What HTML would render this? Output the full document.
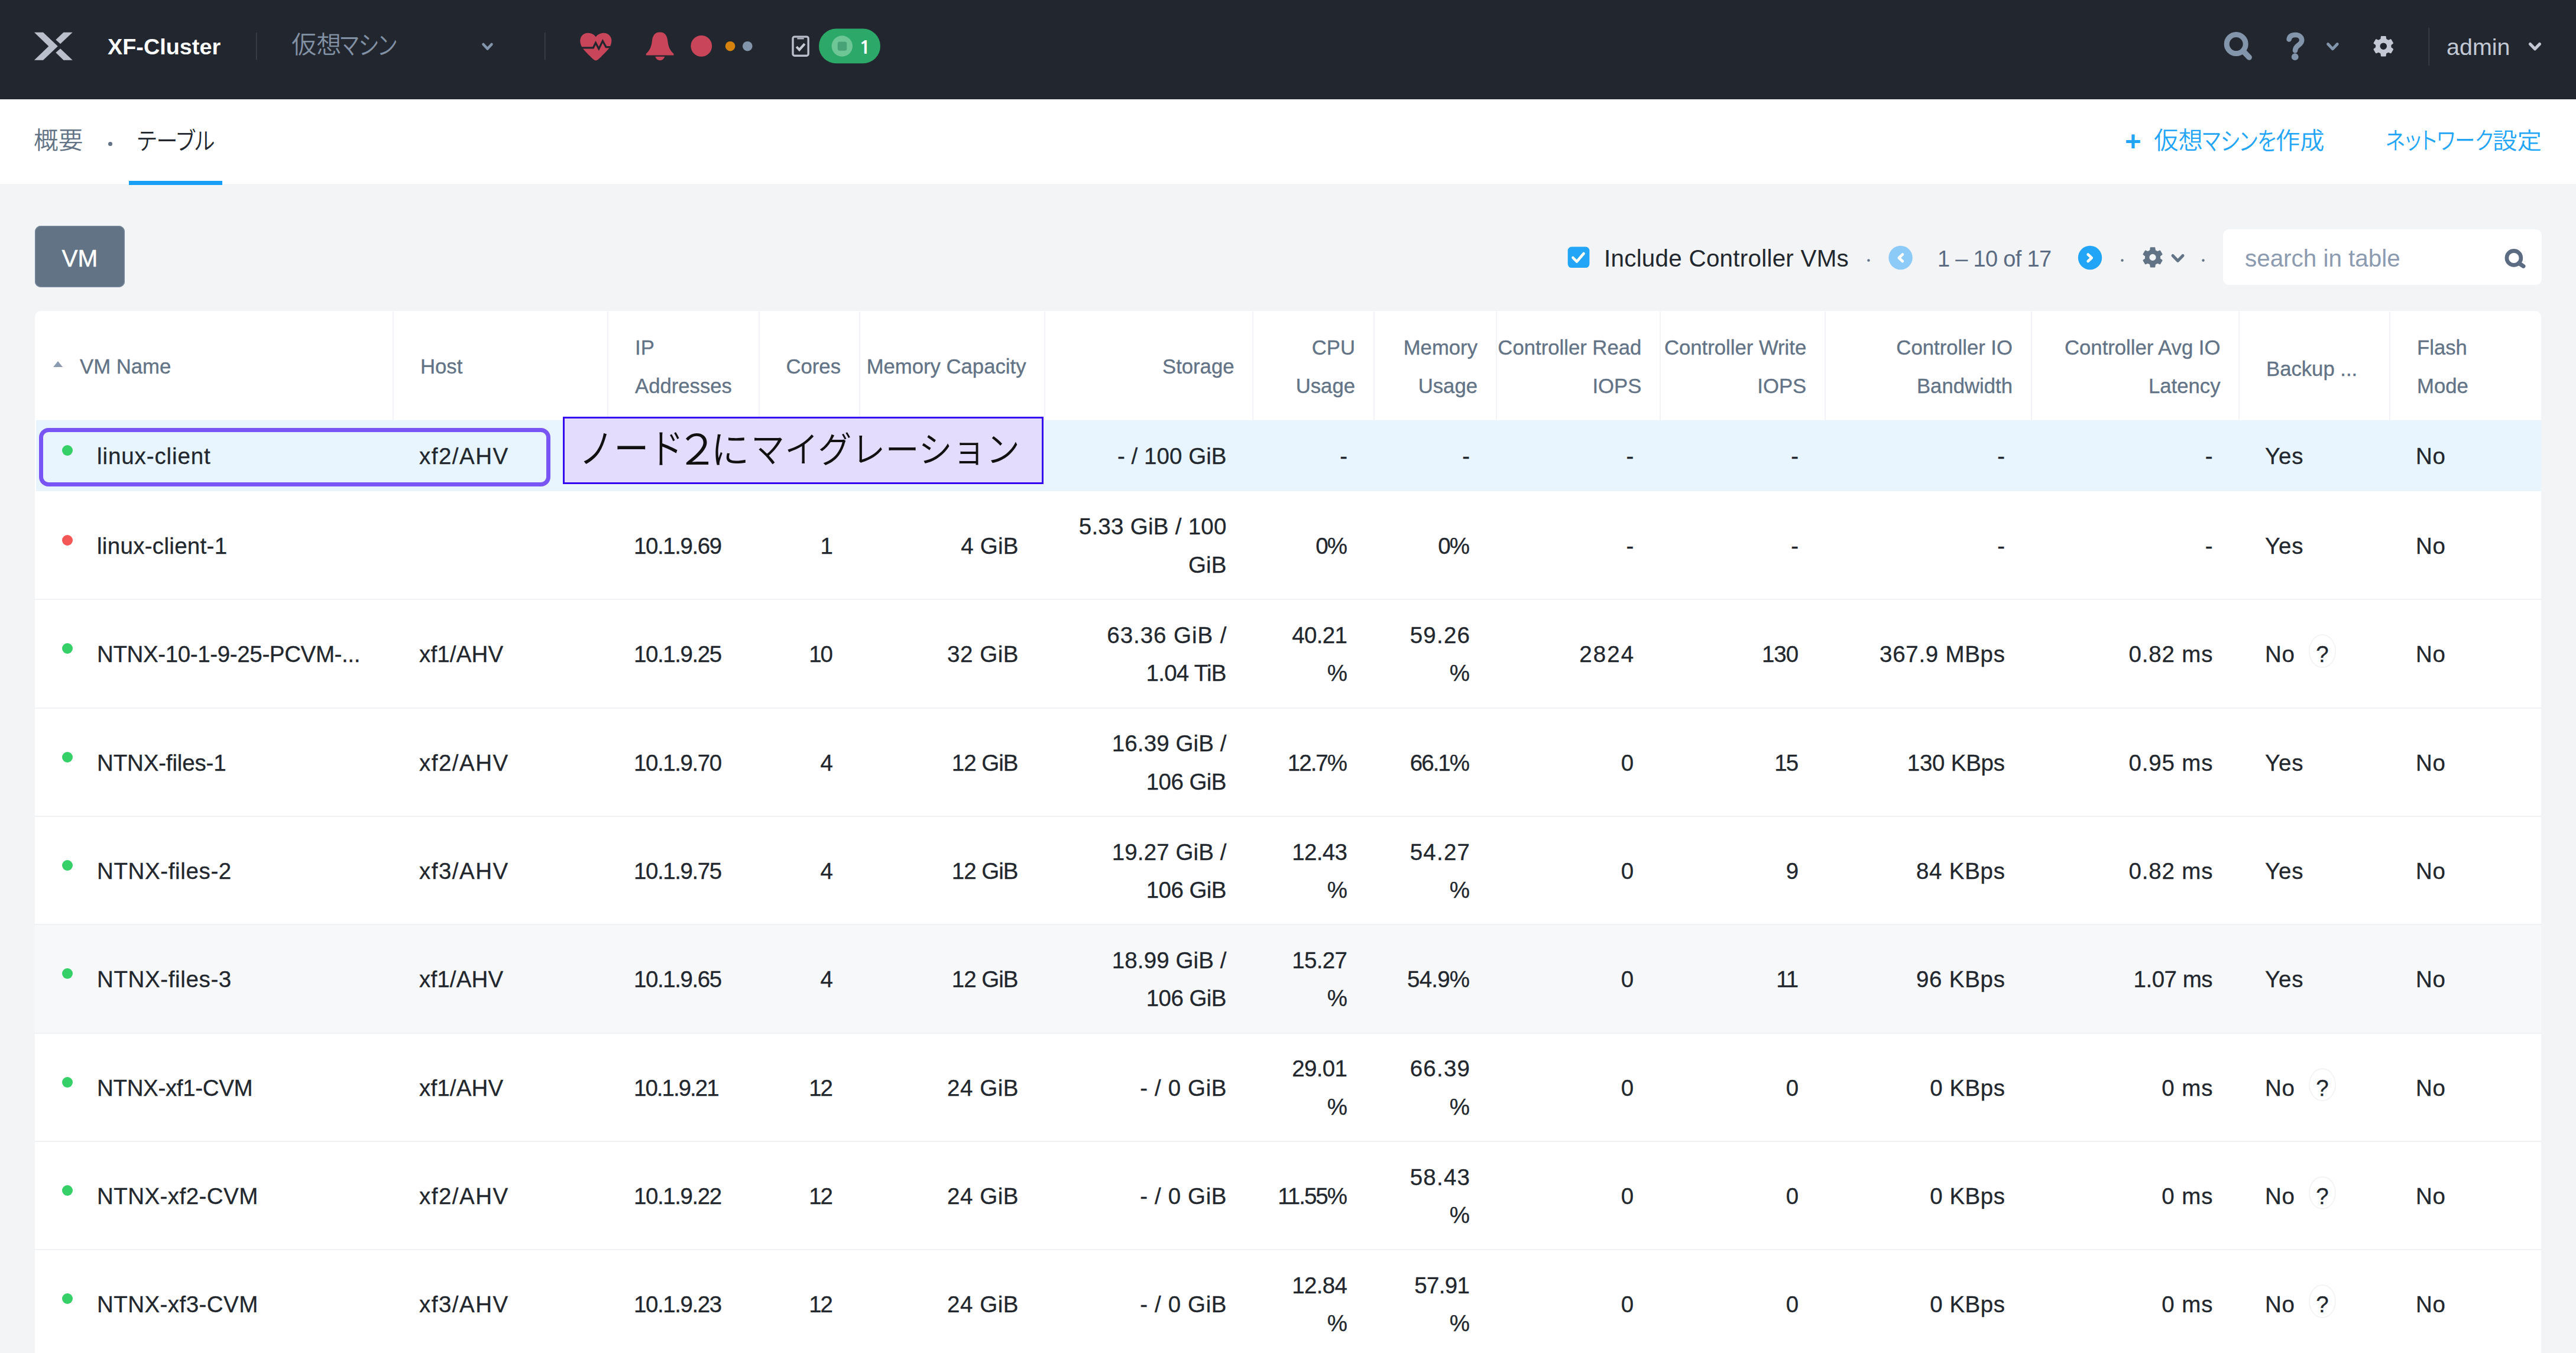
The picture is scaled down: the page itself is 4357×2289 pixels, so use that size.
<!DOCTYPE html>
<html lang="ja"><head><meta charset="utf-8"><title>XF-Cluster</title>
<style>
*{box-sizing:border-box;margin:0;padding:0}
html,body{width:4357px;height:2289px;overflow:hidden;background:#f2f4f6}
body{position:relative;font-family:"Liberation Sans","Noto Sans CJK JP",sans-serif;color:#22272e;font-size:38px}
.abs{position:absolute}
.jp{font-family:"Liberation Sans","Noto Sans CJK JP",sans-serif;font-feature-settings:"palt";white-space:nowrap;display:inline-block;transform-origin:left center}
svg{position:absolute;left:0;top:0;overflow:visible}
#hdr{position:absolute;left:0;top:0;width:4357px;height:167.8px;background:#22262e}
#sub{position:absolute;left:0;top:167.8px;width:4357px;height:143px;background:#fff}
.t{position:absolute;white-space:nowrap;line-height:1}
#tbl{position:absolute;left:59px;top:526.2px;width:4238.5px;height:1780px;background:#fff;border-radius:10px 10px 0 0;overflow:hidden}
.thead{position:absolute;left:0;top:0.8px;width:100%;height:184px}
.hc{position:absolute;top:0;height:184px;display:flex;align-items:center;color:#627386;font-size:34.7px;line-height:64.5px;padding:3.5px 30.5px 0 45px;white-space:nowrap;-webkit-text-stroke:0.35px #627386}
.hc.sep{border-left:2px solid #f1f3f6}
.hc.r{justify-content:flex-end;text-align:right}
.hc.l{justify-content:flex-start;text-align:left}
.hc span{display:block}
.sort{display:block;width:0;height:0;border-left:8px solid transparent;border-right:8px solid transparent;border-bottom:10.5px solid #8c9bb0;margin:-9px 29px 0 -14px}
.row{position:absolute;left:0;width:100%}
.row.bt{border-top:2px solid #f0f2f5}
.row.sel{background:linear-gradient(to right,#fff 2px,#e8f5fe 2px)}
.row.hov{background:#f7f8fa}
.c{position:absolute;top:0;height:100%;display:flex;align-items:center;font-size:38.5px;line-height:64.5px;padding:0 43.5px 0 45px;white-space:nowrap;-webkit-text-stroke:0.3px #22272e}
.row.bt .c{top:0}
.c.r{justify-content:flex-end;text-align:right}
.c.l{justify-content:flex-start}
.c .l{display:block}
.c .w{padding-top:3px}
.dot{display:block;width:18px;height:18px;border-radius:50%;margin:-17px 41px 0 1px;flex:none}
.dot.g{background:#36d068}
.dot.r{background:#f55656}
.q{display:inline-block;width:46.7px;height:56.5px;padding-top:7px;line-height:49.5px;border:2px solid #f3f4f6;border-radius:50%;text-align:center;font-size:38.5px;margin:-12px 0 -12px 23px;letter-spacing:0}
#hl{position:absolute;left:66px;top:723.9px;width:865px;height:98.9px;border:7px solid #7a55f6;border-radius:16px}
#anno{position:absolute;left:952px;top:704.5px;width:813px;height:114px;background:#e4dcfd;border:3px solid #3507ee;display:flex;align-items:center;color:#111}

.hc em{font-style:normal;position:relative;top:3.5px}
.grp{position:absolute;left:0;top:0;width:0;height:0}

</style></head><body>
<div id="hdr">
<svg width="4357" height="167" viewBox="0 0 4357 167">
<g fill="#b9bfcb">
<path d="M57.9,54.8 L73,54.8 L97.8,78.2 L73,101.7 L57.9,101.7 L82.3,78.2Z"/>
<path d="M107.5,54.8 L122.7,54.8 L102.1,74.2 L94.3,67.2Z"/>
<path d="M94.3,89 L102.1,82.3 L122.7,101.7 L107.5,101.7Z"/>
</g>
<rect x="433" y="55" width="1.5" height="46" fill="#3b414d"/>
<path d="M817.5,75 L824.5,82.5 L831.5,75" fill="none" stroke="#8295ab" stroke-width="4.5" stroke-linecap="round" stroke-linejoin="round"/>
<rect x="921" y="55" width="1.5" height="46" fill="#3b414d"/>
<!-- heart -->
<path fill="#c9455a" d="M1007.8,102.3 C1005.5,102.3 1003.5,100.5 1001,98 C996,93 989,86.5 985.5,81.5 C981,75 980.5,68.5 982,64.5 C984,59 989,55.7 994.6,55.7 C1000.5,55.7 1005.5,58.8 1007.8,62.5 C1010.1,58.8 1015.1,55.7 1021,55.7 C1026.6,55.7 1031.6,59 1033.6,64.5 C1035.1,68.5 1034.6,75 1030.1,81.5 C1026.6,86.5 1019.6,93 1014.6,98 C1012.1,100.5 1010.1,102.3 1007.8,102.3Z"/>
<path d="M980,80.8 L1003.4,80.8 L1007.5,72.6 L1012.8,82.6 L1019.4,69.4 L1025.1,79.6 L1036,79.6" fill="none" stroke="#22262e" stroke-width="3.2" stroke-linejoin="miter"/>
<!-- bell -->
<g fill="#c9455a">
<path d="M1116.1,54.4 C1126,54.4 1128.5,62 1129.3,69 C1130.3,79 1133,85 1139.5,91 L1139.5,93.6 L1092.7,93.6 L1092.7,91 C1099.2,85 1101.9,79 1102.9,69 C1103.7,62 1106.2,54.4 1116.1,54.4Z"/>
<path d="M1108.3,95.8 L1124.3,95.8 C1123,100 1120,102.2 1116.3,102.2 C1112.6,102.2 1109.6,100 1108.3,95.8Z"/>
<circle cx="1186.3" cy="77.9" r="17.9"/>
</g>
<circle cx="1235.1" cy="78.2" r="8.3" fill="#d5820e"/>
<circle cx="1264.3" cy="78.2" r="8.3" fill="#8295ab"/>
<!-- clipboard -->
<rect x="1341" y="62.1" width="26.2" height="32.2" rx="3" fill="none" stroke="#b9bfcb" stroke-width="3.4"/>
<rect x="1348.4" y="64.2" width="11.3" height="2.2" fill="#b9bfcb"/>
<path d="M1347.2,79.2 L1352,84.2 L1361,74.2" fill="none" stroke="#c5cad4" stroke-width="4" />
<!-- pill -->
<rect x="1385" y="48.6" width="104" height="58.7" rx="29.35" fill="#2ca868"/>
<circle cx="1424.3" cy="78" r="17.7" fill="#6ec596"/>
<rect x="1416.8" y="70.4" width="15.5" height="15.4" rx="3.5" fill="#47a377"/>
<!-- search -->
<g fill="none" stroke="#8295ab" stroke-linecap="round">
<circle cx="3782.2" cy="74.6" r="16" stroke-width="9"/>
<path d="M3795.5,88 L3804.2,97" stroke-width="9.5"/>
<path d="M3871.6,66.5 C3872.5,61 3877,59 3882.5,59 C3889,59 3893.2,63 3893.2,68 C3893.2,76.5 3882,76 3882,85.5" stroke-width="8.6"/>
</g>
<circle cx="3881.7" cy="96.2" r="5.9" fill="#8295ab"/>
<path d="M3937.5,74.5 L3945.4,82.8 L3953.3,74.5" fill="none" stroke="#8295ab" stroke-width="4.8" stroke-linecap="round" stroke-linejoin="round"/>
<path d="M4027.34,66.45 L4027.93,61.95 L4034.67,61.95 L4035.26,66.45 L4039.50,68.89 L4043.69,67.15 L4047.06,73.00 L4043.46,75.76 L4043.46,80.64 L4047.06,83.40 L4043.69,89.25 L4039.50,87.51 L4035.26,89.95 L4034.67,94.45 L4027.93,94.45 L4027.34,89.95 L4023.10,87.51 L4018.91,89.25 L4015.54,83.40 L4019.14,80.64 L4019.14,75.76 L4015.54,73.00 L4018.91,67.15 L4023.10,68.89Z M4038.10,78.20 A6.8,6.8 0 1,0 4024.50,78.20 A6.8,6.8 0 1,0 4038.10,78.20Z" fill="#c2c8d4" fill-rule="evenodd" stroke="#c2c8d4" stroke-width="2" stroke-linejoin="round"/>
<rect x="4107.5" y="47" width="1.5" height="64" fill="#3b414d"/>
<path d="M4279.5,74.5 L4287.5,82.8 L4295.5,74.5" fill="none" stroke="#c2c8d4" stroke-width="5.2" stroke-linecap="round" stroke-linejoin="round"/>
</svg>
<div class="t" id="cl" style="left:182px;top:60.5px;font-size:37.8px;font-weight:bold;color:#fff">XF-Cluster</div>
<div class="t" id="adm" style="left:4138px;top:59.5px;font-size:39.5px;color:#c2c8d4">admin</div>
</div>
<div id="sub">
<div class="abs" style="left:182.9px;top:72.3px;width:7.4px;height:7.4px;border-radius:50%;background:#627386"></div>
<div class="abs" style="left:218.3px;top:138.4px;width:158.2px;height:6.4px;background:#18a0f7"></div>
</div>
<!-- toolbar -->
<div class="abs" id="vmbtn" style="left:59px;top:382.4px;width:151.6px;height:103.5px;border-radius:10px;background:#627386;color:#fff;font-size:40.5px;-webkit-text-stroke:0.5px #fff;display:flex;align-items:center;justify-content:center;padding-top:7px;box-shadow:inset 0 0 0 1.5px #76869a">VM</div>
<svg width="4357" height="520" viewBox="0 0 4357 520">
<rect x="2651.7" y="417.5" width="36.7" height="35.6" rx="6.5" fill="#22a5f7"/>
<path d="M2660.5,436 L2667,442.6 L2678.6,429" fill="none" stroke="#fff" stroke-width="4.6" stroke-linecap="round" stroke-linejoin="round"/>
<circle cx="3160.5" cy="440.5" r="2.2" fill="#627386"/>
<circle cx="3214.6" cy="436" r="20.2" fill="#8ccbf7"/>
<path d="M3218,430.5 L3211.8,436.2 L3218,442" fill="none" stroke="#fff" stroke-width="4.6" stroke-linecap="round" stroke-linejoin="round"/>
<circle cx="3535" cy="436" r="20.2" fill="#22a5f7"/>
<path d="M3531.6,430.5 L3537.8,436.2 L3531.6,442" fill="none" stroke="#fff" stroke-width="4.6" stroke-linecap="round" stroke-linejoin="round"/>
<circle cx="3589.5" cy="440.5" r="2.2" fill="#627386"/>
<path d="M3637.10,423.84 L3637.67,419.34 L3644.33,419.34 L3644.90,423.84 L3649.06,426.24 L3653.24,424.48 L3656.57,430.26 L3652.96,432.99 L3652.96,437.81 L3656.57,440.54 L3653.24,446.32 L3649.06,444.56 L3644.90,446.96 L3644.33,451.46 L3637.67,451.46 L3637.10,446.96 L3632.94,444.56 L3628.76,446.32 L3625.43,440.54 L3629.04,437.81 L3629.04,432.99 L3625.43,430.26 L3628.76,424.48 L3632.94,426.24Z M3647.60,435.40 A6.6,6.6 0 1,0 3634.40,435.40 A6.6,6.6 0 1,0 3647.60,435.40Z" fill="#627386" fill-rule="evenodd" stroke="#627386" stroke-width="2" stroke-linejoin="round"/>
<path d="M3675,432.5 L3683.5,441.2 L3692,432.5" fill="none" stroke="#627386" stroke-width="5" stroke-linecap="round" stroke-linejoin="round"/>
<circle cx="3726.5" cy="440.5" r="2.2" fill="#627386"/>
<rect x="3760" y="388.2" width="539" height="93.7" rx="9.5" fill="#fff"/>
<g fill="none" stroke="#5a6b82" stroke-linecap="round">
<circle cx="4251.9" cy="436.4" r="12" stroke-width="6.6"/>
<path d="M4261.5,446 L4268,450.3" stroke-width="7"/>
</g>
</svg>
<div class="t" id="inc" style="left:2713px;top:417px;font-size:40.4px;color:#22272e;letter-spacing:0.25px">Include Controller VMs</div>
<div class="t" id="pg" style="left:3277px;top:419px;font-size:38px;color:#5a6b82;letter-spacing:-0.7px">1 – 10 of 17</div>
<div class="t" id="ph" style="left:3797px;top:417px;font-size:40.4px;color:#8c9bb0">search in table</div>

<div id="tbl">
<div class="thead">
<div class="hc l" style="left:0.0px;width:605.0px"><i class="sort"></i><span>VM Name</span></div>
<div class="hc l sep" style="left:605.0px;width:363.0px"><span>Host</span></div>
<div class="hc l sep" style="left:968.0px;width:256.0px"><span>IP<br>Addresses</span></div>
<div class="hc r sep" style="left:1224.0px;width:169.5px"><span>Cores</span></div>
<div class="hc r sep" style="left:1393.5px;width:313.5px"><span>Memory Capacity</span></div>
<div class="hc r sep" style="left:1707.0px;width:352.0px"><span>Storage</span></div>
<div class="hc r sep" style="left:2059.0px;width:204.5px"><span>CPU<br>Usage</span></div>
<div class="hc r sep" style="left:2263.5px;width:207.0px"><span>Memory<br>Usage</span></div>
<div class="hc r sep" style="left:2470.5px;width:277.3px"><span>Controller Read<br>IOPS</span></div>
<div class="hc r sep" style="left:2747.8px;width:278.9px"><span>Controller Write<br>IOPS</span></div>
<div class="hc r sep" style="left:3026.7px;width:348.8px"><span>Controller IO<br>Bandwidth</span></div>
<div class="hc r sep" style="left:3375.5px;width:351.5px"><span>Controller Avg IO<br>Latency</span></div>
<div class="hc l sep" style="left:3727.0px;width:255.0px"><span><em>Backup ...</em></span></div>
<div class="hc l sep" style="left:3982.0px;width:256.5px"><span>Flash<br>Mode</span></div>
</div>
<div class="row sel" style="top:184.4px;height:120.4px">
<div class="c l c0" style="left:0.0px;width:605.0px"><i class="dot g"></i><div class="w"><span class="l" style="letter-spacing:0.9px">linux-client</span></div></div>
<div class="c l c1" style="left:605.0px;width:363.0px"><div class="w"><span class="l" style="letter-spacing:1.5px">xf2/AHV</span></div></div>
<div class="c l c2" style="left:968.0px;width:256.0px"><div class="w"></div></div>
<div class="c r c3" style="left:1224.0px;width:169.5px"><div class="w"></div></div>
<div class="c r c4" style="left:1393.5px;width:313.5px"><div class="w"></div></div>
<div class="c r c5" style="left:1707.0px;width:352.0px"><div class="w"><span class="l" style="letter-spacing:0.05px;margin-right:-0.05px">- / 100 GiB</span></div></div>
<div class="c r c6" style="left:2059.0px;width:204.5px"><div class="w"><span class="l" style="letter-spacing:0.68px;margin-right:-0.68px">-</span></div></div>
<div class="c r c7" style="left:2263.5px;width:207.0px"><div class="w"><span class="l" style="letter-spacing:0.68px;margin-right:-0.68px">-</span></div></div>
<div class="c r c8" style="left:2470.5px;width:277.3px"><div class="w"><span class="l" style="letter-spacing:0.68px;margin-right:-0.68px">-</span></div></div>
<div class="c r c9" style="left:2747.8px;width:278.9px"><div class="w"><span class="l" style="letter-spacing:0.68px;margin-right:-0.68px">-</span></div></div>
<div class="c r c10" style="left:3026.7px;width:348.8px"><div class="w"><span class="l" style="letter-spacing:0.68px;margin-right:-0.68px">-</span></div></div>
<div class="c r c11" style="left:3375.5px;width:351.5px"><div class="w"><span class="l" style="letter-spacing:0.68px;margin-right:-0.68px">-</span></div></div>
<div class="c l c12" style="left:3727.0px;width:255.0px"><div class="w"><span class="l" style="letter-spacing:0.81px">Yes</span></div></div>
<div class="c l c13" style="left:3982.0px;width:256.5px"><div class="w"><span class="l" style="letter-spacing:0.64px">No</span></div></div>
</div>
<div class="row" style="top:304.8px;height:182.7px">
<div class="c l c0" style="left:0.0px;width:605.0px"><i class="dot r"></i><div class="w"><span class="l" style="letter-spacing:0.31px">linux-client-1</span></div></div>
<div class="c l c1" style="left:605.0px;width:363.0px"><div class="w"></div></div>
<div class="c l c2" style="left:968.0px;width:256.0px"><div class="w"><span class="l" style="letter-spacing:-1.41px">10.1.9.69</span></div></div>
<div class="c r c3" style="left:1224.0px;width:169.5px"><div class="w"><span class="l" style="letter-spacing:-2.0px;margin-right:2.0px">1</span></div></div>
<div class="c r c4" style="left:1393.5px;width:313.5px"><div class="w"><span class="l" style="letter-spacing:0.24px;margin-right:-0.24px">4 GiB</span></div></div>
<div class="c r c5" style="left:1707.0px;width:352.0px"><div class="w"><span class="l" style="letter-spacing:0.28px;margin-right:-0.28px">5.33 GiB / 100</span><span class="l" style="letter-spacing:0.17px;margin-right:-0.17px">GiB</span></div></div>
<div class="c r c6" style="left:2059.0px;width:204.5px"><div class="w"><span class="l" style="letter-spacing:-2.0px;margin-right:2.0px">0%</span></div></div>
<div class="c r c7" style="left:2263.5px;width:207.0px"><div class="w"><span class="l" style="letter-spacing:-2.0px;margin-right:2.0px">0%</span></div></div>
<div class="c r c8" style="left:2470.5px;width:277.3px"><div class="w"><span class="l" style="letter-spacing:0.68px;margin-right:-0.68px">-</span></div></div>
<div class="c r c9" style="left:2747.8px;width:278.9px"><div class="w"><span class="l" style="letter-spacing:0.68px;margin-right:-0.68px">-</span></div></div>
<div class="c r c10" style="left:3026.7px;width:348.8px"><div class="w"><span class="l" style="letter-spacing:0.68px;margin-right:-0.68px">-</span></div></div>
<div class="c r c11" style="left:3375.5px;width:351.5px"><div class="w"><span class="l" style="letter-spacing:0.68px;margin-right:-0.68px">-</span></div></div>
<div class="c l c12" style="left:3727.0px;width:255.0px"><div class="w"><span class="l" style="letter-spacing:0.81px">Yes</span></div></div>
<div class="c l c13" style="left:3982.0px;width:256.5px"><div class="w"><span class="l" style="letter-spacing:0.64px">No</span></div></div>
</div>
<div class="row bt" style="top:487.1px;height:183.3px">
<div class="c l c0" style="left:0.0px;width:605.0px"><i class="dot g"></i><div class="w"><span class="l" style="letter-spacing:-0.37px">NTNX-10-1-9-25-PCVM-...</span></div></div>
<div class="c l c1" style="left:605.0px;width:363.0px"><div class="w"><span class="l" style="letter-spacing:0.17px">xf1/AHV</span></div></div>
<div class="c l c2" style="left:968.0px;width:256.0px"><div class="w"><span class="l" style="letter-spacing:-1.41px">10.1.9.25</span></div></div>
<div class="c r c3" style="left:1224.0px;width:169.5px"><div class="w"><span class="l" style="letter-spacing:-2.0px;margin-right:2.0px">10</span></div></div>
<div class="c r c4" style="left:1393.5px;width:313.5px"><div class="w"><span class="l" style="letter-spacing:0.55px;margin-right:-0.55px">32 GiB</span></div></div>
<div class="c r c5" style="left:1707.0px;width:352.0px"><div class="w"><span class="l" style="letter-spacing:0.95px;margin-right:-0.95px">63.36 GiB /</span><span class="l" style="letter-spacing:-0.76px;margin-right:0.76px">1.04 TiB</span></div></div>
<div class="c r c6" style="left:2059.0px;width:204.5px"><div class="w"><span class="l" style="letter-spacing:-0.63px;margin-right:0.63px">40.21</span><span class="l" style="letter-spacing:-2.0px;margin-right:2.0px">%</span></div></div>
<div class="c r c7" style="left:2263.5px;width:207.0px"><div class="w"><span class="l" style="letter-spacing:1.23px;margin-right:-1.23px">59.26</span><span class="l" style="letter-spacing:-2.0px;margin-right:2.0px">%</span></div></div>
<div class="c r c8" style="left:2470.5px;width:277.3px"><div class="w"><span class="l" style="letter-spacing:2.09px;margin-right:-2.09px">2824</span></div></div>
<div class="c r c9" style="left:2747.8px;width:278.9px"><div class="w"><span class="l" style="letter-spacing:-1.01px;margin-right:1.01px">130</span></div></div>
<div class="c r c10" style="left:3026.7px;width:348.8px"><div class="w"><span class="l" style="letter-spacing:0.72px;margin-right:-0.72px">367.9 MBps</span></div></div>
<div class="c r c11" style="left:3375.5px;width:351.5px"><div class="w"><span class="l" style="letter-spacing:0.82px;margin-right:-0.82px">0.82 ms</span></div></div>
<div class="c l c12" style="left:3727.0px;width:255.0px"><div class="w"><span class="i" style="letter-spacing:0.64px">No</span><span class="q">?</span></div></div>
<div class="c l c13" style="left:3982.0px;width:256.5px"><div class="w"><span class="l" style="letter-spacing:0.64px">No</span></div></div>
</div>
<div class="row bt" style="top:670.4px;height:183.4px">
<div class="c l c0" style="left:0.0px;width:605.0px"><i class="dot g"></i><div class="w"><span class="l" style="letter-spacing:-0.15px">NTNX-files-1</span></div></div>
<div class="c l c1" style="left:605.0px;width:363.0px"><div class="w"><span class="l" style="letter-spacing:1.5px">xf2/AHV</span></div></div>
<div class="c l c2" style="left:968.0px;width:256.0px"><div class="w"><span class="l" style="letter-spacing:-1.41px">10.1.9.70</span></div></div>
<div class="c r c3" style="left:1224.0px;width:169.5px"><div class="w"><span class="l" style="letter-spacing:2.09px;margin-right:-2.09px">4</span></div></div>
<div class="c r c4" style="left:1393.5px;width:313.5px"><div class="w"><span class="l" style="letter-spacing:-1.0px;margin-right:1.0px">12 GiB</span></div></div>
<div class="c r c5" style="left:1707.0px;width:352.0px"><div class="w"><span class="l" style="letter-spacing:0.11px;margin-right:-0.11px">16.39 GiB /</span><span class="l" style="letter-spacing:-0.56px;margin-right:0.56px">106 GiB</span></div></div>
<div class="c r c6" style="left:2059.0px;width:204.5px"><div class="w"><span class="l" style="letter-spacing:-2.0px;margin-right:2.0px">12.7%</span></div></div>
<div class="c r c7" style="left:2263.5px;width:207.0px"><div class="w"><span class="l" style="letter-spacing:-2.0px;margin-right:2.0px">66.1%</span></div></div>
<div class="c r c8" style="left:2470.5px;width:277.3px"><div class="w"><span class="l" style="letter-spacing:2.09px;margin-right:-2.09px">0</span></div></div>
<div class="c r c9" style="left:2747.8px;width:278.9px"><div class="w"><span class="l" style="letter-spacing:-2.0px;margin-right:2.0px">15</span></div></div>
<div class="c r c10" style="left:3026.7px;width:348.8px"><div class="w"><span class="l" style="letter-spacing:-0.25px;margin-right:0.25px">130 KBps</span></div></div>
<div class="c r c11" style="left:3375.5px;width:351.5px"><div class="w"><span class="l" style="letter-spacing:0.82px;margin-right:-0.82px">0.95 ms</span></div></div>
<div class="c l c12" style="left:3727.0px;width:255.0px"><div class="w"><span class="l" style="letter-spacing:0.81px">Yes</span></div></div>
<div class="c l c13" style="left:3982.0px;width:256.5px"><div class="w"><span class="l" style="letter-spacing:0.64px">No</span></div></div>
</div>
<div class="row bt" style="top:853.8px;height:183.4px">
<div class="c l c0" style="left:0.0px;width:605.0px"><i class="dot g"></i><div class="w"><span class="l" style="letter-spacing:0.63px">NTNX-files-2</span></div></div>
<div class="c l c1" style="left:605.0px;width:363.0px"><div class="w"><span class="l" style="letter-spacing:1.5px">xf3/AHV</span></div></div>
<div class="c l c2" style="left:968.0px;width:256.0px"><div class="w"><span class="l" style="letter-spacing:-1.41px">10.1.9.75</span></div></div>
<div class="c r c3" style="left:1224.0px;width:169.5px"><div class="w"><span class="l" style="letter-spacing:2.09px;margin-right:-2.09px">4</span></div></div>
<div class="c r c4" style="left:1393.5px;width:313.5px"><div class="w"><span class="l" style="letter-spacing:-1.0px;margin-right:1.0px">12 GiB</span></div></div>
<div class="c r c5" style="left:1707.0px;width:352.0px"><div class="w"><span class="l" style="letter-spacing:0.11px;margin-right:-0.11px">19.27 GiB /</span><span class="l" style="letter-spacing:-0.56px;margin-right:0.56px">106 GiB</span></div></div>
<div class="c r c6" style="left:2059.0px;width:204.5px"><div class="w"><span class="l" style="letter-spacing:-0.63px;margin-right:0.63px">12.43</span><span class="l" style="letter-spacing:-2.0px;margin-right:2.0px">%</span></div></div>
<div class="c r c7" style="left:2263.5px;width:207.0px"><div class="w"><span class="l" style="letter-spacing:1.23px;margin-right:-1.23px">54.27</span><span class="l" style="letter-spacing:-2.0px;margin-right:2.0px">%</span></div></div>
<div class="c r c8" style="left:2470.5px;width:277.3px"><div class="w"><span class="l" style="letter-spacing:2.09px;margin-right:-2.09px">0</span></div></div>
<div class="c r c9" style="left:2747.8px;width:278.9px"><div class="w"><span class="l" style="letter-spacing:2.09px;margin-right:-2.09px">9</span></div></div>
<div class="c r c10" style="left:3026.7px;width:348.8px"><div class="w"><span class="l" style="letter-spacing:0.75px;margin-right:-0.75px">84 KBps</span></div></div>
<div class="c r c11" style="left:3375.5px;width:351.5px"><div class="w"><span class="l" style="letter-spacing:0.82px;margin-right:-0.82px">0.82 ms</span></div></div>
<div class="c l c12" style="left:3727.0px;width:255.0px"><div class="w"><span class="l" style="letter-spacing:0.81px">Yes</span></div></div>
<div class="c l c13" style="left:3982.0px;width:256.5px"><div class="w"><span class="l" style="letter-spacing:0.64px">No</span></div></div>
</div>
<div class="row hov bt" style="top:1037.2px;height:183.2px">
<div class="c l c0" style="left:0.0px;width:605.0px"><i class="dot g"></i><div class="w"><span class="l" style="letter-spacing:0.63px">NTNX-files-3</span></div></div>
<div class="c l c1" style="left:605.0px;width:363.0px"><div class="w"><span class="l" style="letter-spacing:0.17px">xf1/AHV</span></div></div>
<div class="c l c2" style="left:968.0px;width:256.0px"><div class="w"><span class="l" style="letter-spacing:-1.41px">10.1.9.65</span></div></div>
<div class="c r c3" style="left:1224.0px;width:169.5px"><div class="w"><span class="l" style="letter-spacing:2.09px;margin-right:-2.09px">4</span></div></div>
<div class="c r c4" style="left:1393.5px;width:313.5px"><div class="w"><span class="l" style="letter-spacing:-1.0px;margin-right:1.0px">12 GiB</span></div></div>
<div class="c r c5" style="left:1707.0px;width:352.0px"><div class="w"><span class="l" style="letter-spacing:0.11px;margin-right:-0.11px">18.99 GiB /</span><span class="l" style="letter-spacing:-0.56px;margin-right:0.56px">106 GiB</span></div></div>
<div class="c r c6" style="left:2059.0px;width:204.5px"><div class="w"><span class="l" style="letter-spacing:-0.63px;margin-right:0.63px">15.27</span><span class="l" style="letter-spacing:-2.0px;margin-right:2.0px">%</span></div></div>
<div class="c r c7" style="left:2263.5px;width:207.0px"><div class="w"><span class="l" style="letter-spacing:-0.81px;margin-right:0.81px">54.9%</span></div></div>
<div class="c r c8" style="left:2470.5px;width:277.3px"><div class="w"><span class="l" style="letter-spacing:2.09px;margin-right:-2.09px">0</span></div></div>
<div class="c r c9" style="left:2747.8px;width:278.9px"><div class="w"><span class="l" style="letter-spacing:-2.0px;margin-right:2.0px">11</span></div></div>
<div class="c r c10" style="left:3026.7px;width:348.8px"><div class="w"><span class="l" style="letter-spacing:0.75px;margin-right:-0.75px">96 KBps</span></div></div>
<div class="c r c11" style="left:3375.5px;width:351.5px"><div class="w"><span class="l" style="letter-spacing:-0.51px;margin-right:0.51px">1.07 ms</span></div></div>
<div class="c l c12" style="left:3727.0px;width:255.0px"><div class="w"><span class="l" style="letter-spacing:0.81px">Yes</span></div></div>
<div class="c l c13" style="left:3982.0px;width:256.5px"><div class="w"><span class="l" style="letter-spacing:0.64px">No</span></div></div>
</div>
<div class="row bt" style="top:1220.4px;height:183.4px">
<div class="c l c0" style="left:0.0px;width:605.0px"><i class="dot g"></i><div class="w"><span class="l" style="letter-spacing:-0.34px">NTNX-xf1-CVM</span></div></div>
<div class="c l c1" style="left:605.0px;width:363.0px"><div class="w"><span class="l" style="letter-spacing:0.17px">xf1/AHV</span></div></div>
<div class="c l c2" style="left:968.0px;width:256.0px"><div class="w"><span class="l" style="letter-spacing:-2.0px">10.1.9.21</span></div></div>
<div class="c r c3" style="left:1224.0px;width:169.5px"><div class="w"><span class="l" style="letter-spacing:-2.0px;margin-right:2.0px">12</span></div></div>
<div class="c r c4" style="left:1393.5px;width:313.5px"><div class="w"><span class="l" style="letter-spacing:0.55px;margin-right:-0.55px">24 GiB</span></div></div>
<div class="c r c5" style="left:1707.0px;width:352.0px"><div class="w"><span class="l" style="letter-spacing:0.63px;margin-right:-0.63px">- / 0 GiB</span></div></div>
<div class="c r c6" style="left:2059.0px;width:204.5px"><div class="w"><span class="l" style="letter-spacing:-0.63px;margin-right:0.63px">29.01</span><span class="l" style="letter-spacing:-2.0px;margin-right:2.0px">%</span></div></div>
<div class="c r c7" style="left:2263.5px;width:207.0px"><div class="w"><span class="l" style="letter-spacing:1.23px;margin-right:-1.23px">66.39</span><span class="l" style="letter-spacing:-2.0px;margin-right:2.0px">%</span></div></div>
<div class="c r c8" style="left:2470.5px;width:277.3px"><div class="w"><span class="l" style="letter-spacing:2.09px;margin-right:-2.09px">0</span></div></div>
<div class="c r c9" style="left:2747.8px;width:278.9px"><div class="w"><span class="l" style="letter-spacing:2.09px;margin-right:-2.09px">0</span></div></div>
<div class="c r c10" style="left:3026.7px;width:348.8px"><div class="w"><span class="l" style="letter-spacing:0.52px;margin-right:-0.52px">0 KBps</span></div></div>
<div class="c r c11" style="left:3375.5px;width:351.5px"><div class="w"><span class="l" style="letter-spacing:0.94px;margin-right:-0.94px">0 ms</span></div></div>
<div class="c l c12" style="left:3727.0px;width:255.0px"><div class="w"><span class="i" style="letter-spacing:0.64px">No</span><span class="q">?</span></div></div>
<div class="c l c13" style="left:3982.0px;width:256.5px"><div class="w"><span class="l" style="letter-spacing:0.64px">No</span></div></div>
</div>
<div class="row bt" style="top:1403.8px;height:183.2px">
<div class="c l c0" style="left:0.0px;width:605.0px"><i class="dot g"></i><div class="w"><span class="l" style="letter-spacing:0.44px">NTNX-xf2-CVM</span></div></div>
<div class="c l c1" style="left:605.0px;width:363.0px"><div class="w"><span class="l" style="letter-spacing:1.5px">xf2/AHV</span></div></div>
<div class="c l c2" style="left:968.0px;width:256.0px"><div class="w"><span class="l" style="letter-spacing:-1.41px">10.1.9.22</span></div></div>
<div class="c r c3" style="left:1224.0px;width:169.5px"><div class="w"><span class="l" style="letter-spacing:-2.0px;margin-right:2.0px">12</span></div></div>
<div class="c r c4" style="left:1393.5px;width:313.5px"><div class="w"><span class="l" style="letter-spacing:0.55px;margin-right:-0.55px">24 GiB</span></div></div>
<div class="c r c5" style="left:1707.0px;width:352.0px"><div class="w"><span class="l" style="letter-spacing:0.63px;margin-right:-0.63px">- / 0 GiB</span></div></div>
<div class="c r c6" style="left:2059.0px;width:204.5px"><div class="w"><span class="l" style="letter-spacing:-2.0px;margin-right:2.0px">11.55%</span></div></div>
<div class="c r c7" style="left:2263.5px;width:207.0px"><div class="w"><span class="l" style="letter-spacing:1.23px;margin-right:-1.23px">58.43</span><span class="l" style="letter-spacing:-2.0px;margin-right:2.0px">%</span></div></div>
<div class="c r c8" style="left:2470.5px;width:277.3px"><div class="w"><span class="l" style="letter-spacing:2.09px;margin-right:-2.09px">0</span></div></div>
<div class="c r c9" style="left:2747.8px;width:278.9px"><div class="w"><span class="l" style="letter-spacing:2.09px;margin-right:-2.09px">0</span></div></div>
<div class="c r c10" style="left:3026.7px;width:348.8px"><div class="w"><span class="l" style="letter-spacing:0.52px;margin-right:-0.52px">0 KBps</span></div></div>
<div class="c r c11" style="left:3375.5px;width:351.5px"><div class="w"><span class="l" style="letter-spacing:0.94px;margin-right:-0.94px">0 ms</span></div></div>
<div class="c l c12" style="left:3727.0px;width:255.0px"><div class="w"><span class="i" style="letter-spacing:0.64px">No</span><span class="q">?</span></div></div>
<div class="c l c13" style="left:3982.0px;width:256.5px"><div class="w"><span class="l" style="letter-spacing:0.64px">No</span></div></div>
</div>
<div class="row bt" style="top:1587.0px;height:183.4px">
<div class="c l c0" style="left:0.0px;width:605.0px"><i class="dot g"></i><div class="w"><span class="l" style="letter-spacing:0.44px">NTNX-xf3-CVM</span></div></div>
<div class="c l c1" style="left:605.0px;width:363.0px"><div class="w"><span class="l" style="letter-spacing:1.5px">xf3/AHV</span></div></div>
<div class="c l c2" style="left:968.0px;width:256.0px"><div class="w"><span class="l" style="letter-spacing:-1.41px">10.1.9.23</span></div></div>
<div class="c r c3" style="left:1224.0px;width:169.5px"><div class="w"><span class="l" style="letter-spacing:-2.0px;margin-right:2.0px">12</span></div></div>
<div class="c r c4" style="left:1393.5px;width:313.5px"><div class="w"><span class="l" style="letter-spacing:0.55px;margin-right:-0.55px">24 GiB</span></div></div>
<div class="c r c5" style="left:1707.0px;width:352.0px"><div class="w"><span class="l" style="letter-spacing:0.63px;margin-right:-0.63px">- / 0 GiB</span></div></div>
<div class="c r c6" style="left:2059.0px;width:204.5px"><div class="w"><span class="l" style="letter-spacing:-0.63px;margin-right:0.63px">12.84</span><span class="l" style="letter-spacing:-2.0px;margin-right:2.0px">%</span></div></div>
<div class="c r c7" style="left:2263.5px;width:207.0px"><div class="w"><span class="l" style="letter-spacing:-0.63px;margin-right:0.63px">57.91</span><span class="l" style="letter-spacing:-2.0px;margin-right:2.0px">%</span></div></div>
<div class="c r c8" style="left:2470.5px;width:277.3px"><div class="w"><span class="l" style="letter-spacing:2.09px;margin-right:-2.09px">0</span></div></div>
<div class="c r c9" style="left:2747.8px;width:278.9px"><div class="w"><span class="l" style="letter-spacing:2.09px;margin-right:-2.09px">0</span></div></div>
<div class="c r c10" style="left:3026.7px;width:348.8px"><div class="w"><span class="l" style="letter-spacing:0.52px;margin-right:-0.52px">0 KBps</span></div></div>
<div class="c r c11" style="left:3375.5px;width:351.5px"><div class="w"><span class="l" style="letter-spacing:0.94px;margin-right:-0.94px">0 ms</span></div></div>
<div class="c l c12" style="left:3727.0px;width:255.0px"><div class="w"><span class="i" style="letter-spacing:0.64px">No</span><span class="q">?</span></div></div>
<div class="c l c13" style="left:3982.0px;width:256.5px"><div class="w"><span class="l" style="letter-spacing:0.64px">No</span></div></div>
</div>
</div>
<div id="hl"></div>
<div id="anno"></div>
<div class="grp"><span class="t" style="left:493.15px;top:55.89px;font-size:41.30px;font-weight:350;color:#8391a5;font-feature-settings:'palt';transform:scaleX(1.0236);transform-origin:0 0">仮想</span><span class="t" style="left:575.33px;top:55.70px;font-size:43.37px;font-weight:350;color:#8391a5;font-feature-settings:'palt';transform:scaleX(0.8170);transform-origin:0 0">マシン</span></div>
<div class="grp"><span class="t" style="left:57.35px;top:218.19px;font-size:40.54px;font-weight:350;color:#627386;font-feature-settings:'palt';transform:scaleX(1.0277);transform-origin:0 0">概要</span></div>
<div class="grp"><span class="t" style="left:231.50px;top:218.71px;font-size:40.99px;font-weight:350;color:#22272e;font-feature-settings:'palt';transform:scaleX(0.8779);transform-origin:0 0">テーブル</span></div>
<div class="grp"><span class="t" style="left:3594.11px;top:216.57px;font-size:45.49px;font-weight:700;color:#22a5f7;transform:scaleX(1.0376);transform-origin:0 0">+</span></div>
<div class="grp"><span class="t" style="left:3642.57px;top:218.19px;font-size:40.54px;font-weight:350;color:#22a5f7;font-feature-settings:'palt';transform:scaleX(1.0249);transform-origin:0 0">仮想</span><span class="t" style="left:3724.98px;top:218.71px;font-size:41.79px;font-weight:350;color:#22a5f7;font-feature-settings:'palt';transform:scaleX(0.8240);transform-origin:0 0">マシンを</span><span class="t" style="left:3849.35px;top:218.20px;font-size:40.11px;font-weight:350;color:#22a5f7;font-feature-settings:'palt';transform:scaleX(1.0285);transform-origin:0 0">作成</span></div>
<div class="grp"><span class="t" style="left:4034.99px;top:218.59px;font-size:40.23px;font-weight:350;color:#22a5f7;font-feature-settings:'palt';transform:scaleX(0.8563);transform-origin:0 0">ネットワーク</span><span class="t" style="left:4216.24px;top:219.51px;font-size:38.80px;font-weight:350;color:#22a5f7;font-feature-settings:'palt';transform:scaleX(1.0686);transform-origin:0 0">設定</span></div>
<div class="grp"><span class="t" style="left:1451.67px;top:66.18px;font-size:30.26px;font-weight:700;color:#fff;font-family:'NanumGothic',sans-serif;transform:scaleX(1.2028);transform-origin:0 0">1</span></div>
<div class="grp"><span class="t" style="left:979.42px;top:726.17px;font-size:69.25px;font-weight:350;color:#111;transform:scaleX(0.8547);transform-origin:0 0">ノード</span><span class="t" style="left:1142.65px;top:726.96px;font-size:70.40px;font-weight:350;color:#111;transform:scaleX(1.0271);transform-origin:0 0">２</span><span class="t" style="left:1202.06px;top:729.77px;font-size:64.81px;font-weight:350;color:#111;transform:scaleX(1.0140);transform-origin:0 0">に</span><span class="t" style="left:1269.61px;top:731.79px;font-size:60.88px;font-weight:350;color:#111;transform:scaleX(0.9388);transform-origin:0 0">マイグレーション</span></div>
</body></html>
